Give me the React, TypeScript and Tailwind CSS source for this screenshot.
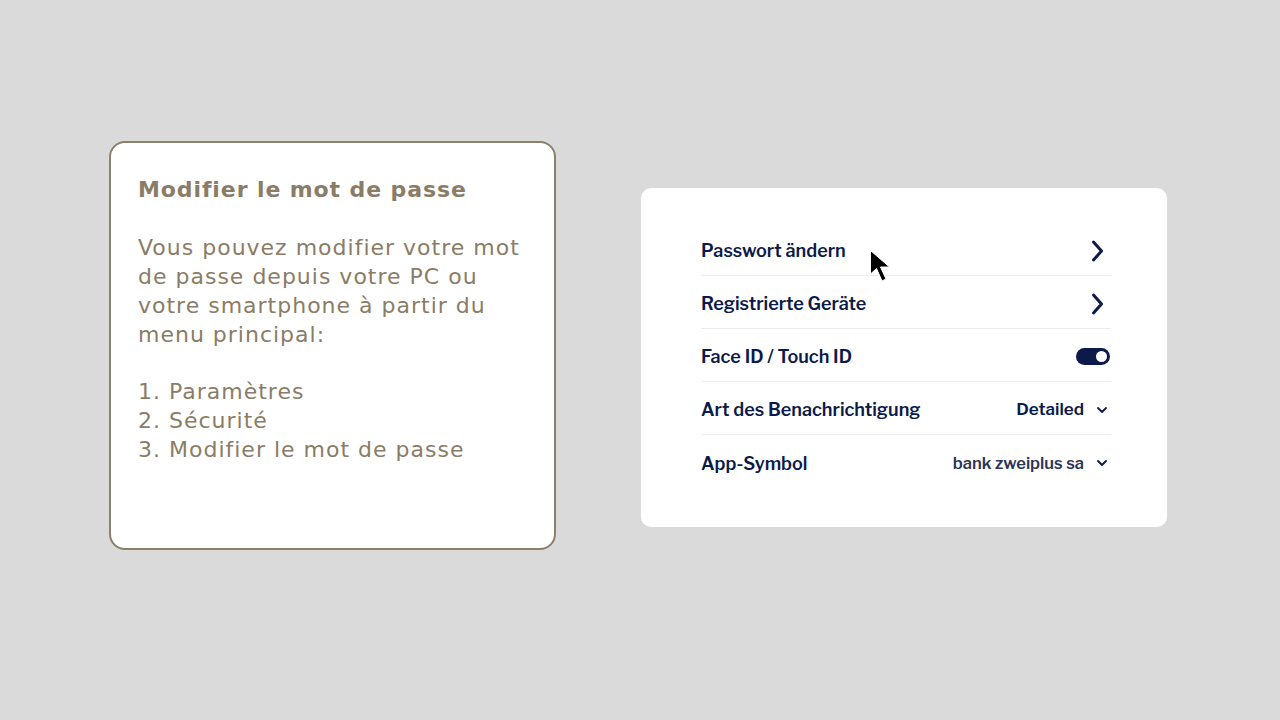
import React from "react";

const Chevron = () => (
  <svg width="16" height="24" viewBox="0 0 16 24" fill="none">
    <path d="M4.5 3 L12.5 12 L4.5 21" stroke="#0b1a4a" strokeWidth="3" strokeLinecap="round" strokeLinejoin="round" />
  </svg>
);

const Down = () => (
  <svg width="12" height="8" viewBox="0 0 12 8" fill="none">
    <path d="M2 2 L6 6 L10 2" stroke="#0b1a4a" strokeWidth="1.8" strokeLinecap="round" strokeLinejoin="round" />
  </svg>
);

const Row = ({ label, right, last }: { label: string; right: React.ReactNode; last?: boolean }) => (
  <div className={`flex h-[53px] items-center justify-between pt-[3px] ${last ? "" : "border-b border-[#ececec]"}`}>
    <span className="text-[18px] font-semibold text-[#0b1a4a]">{label}</span>
    {right}
  </div>
);

export default function App() {
  return (
    <div className="relative h-[720px] w-[1280px] overflow-hidden bg-[#dadada]">
      <div className="flex items-start pl-[109px] pt-[141px] gap-[85px]">
        <div
          className="h-[409px] w-[447px] rounded-[16px] border-2 border-[#8c806c] bg-white pl-[27px] pt-[32px] text-[#8a7c66] tracking-[1px]"
          style={{ fontFamily: "Verdana, 'DejaVu Sans', sans-serif" }}
        >
          <div className="text-[22px] font-bold leading-[29px] tracking-[0.9px]">Modifier le mot de passe</div>
          <div className="mt-[29px] text-[22px] leading-[29px]">
            Vous pouvez modifier votre mot<br />
            de passe depuis votre PC ou<br />
            votre smartphone à partir du<br />
            menu principal:
          </div>
          <div className="mt-[28px] text-[22px] leading-[29px]">
            1. Paramètres<br />
            2. Sécurité<br />
            3. Modifier le mot de passe
          </div>
        </div>

        <div
          className="mt-[47px] h-[339px] w-[526px] rounded-[10px] bg-white pl-[60px] pr-[56px] pt-[35px]"
          style={{ fontFamily: "'Libre Franklin', 'Liberation Sans', Arial, sans-serif" }}
        >
          <Row label="Passwort ändern" right={<span className="mr-[6px] flex"><Chevron /></span>} />
          <Row label="Registrierte Geräte" right={<span className="mr-[6px] flex"><Chevron /></span>} />
          <Row
            label="Face ID / Touch ID"
            right={
              <span className="mr-[1px] flex h-[17px] w-[34px] items-center justify-end rounded-full bg-[#0b1a4a] pr-[3px]">
                <span className="h-[11px] w-[11px] rounded-full bg-white" />
              </span>
            }
          />
          <Row
            label="Art des Benachrichtigung"
            right={
              <span className="flex items-center gap-[12px]">
                <span className="text-[17px] font-semibold text-[#0b1a4a]">Detailed</span>
                <span className="mr-[3px] flex"><Down /></span>
              </span>
            }
          />
          <Row
            label="App-Symbol"
            last
            right={
              <span className="flex items-center gap-[12px]">
                <span className="text-[16.5px] font-semibold text-[#2a3558]">bank zweiplus sa</span>
                <span className="mr-[3px] flex"><Down /></span>
              </span>
            }
          />
        </div>
      </div>

      <svg className="absolute left-[869px] top-[249px]" width="24" height="36" viewBox="0 0 24 36">
        <path d="M1.5 1.5 L1.5 25 L7.5 19.5 L13 32 L17 30 L11.5 18 L20.5 18 Z" fill="#000" stroke="#fff" strokeWidth="1" strokeLinejoin="round" />
      </svg>
    </div>
  );
}
